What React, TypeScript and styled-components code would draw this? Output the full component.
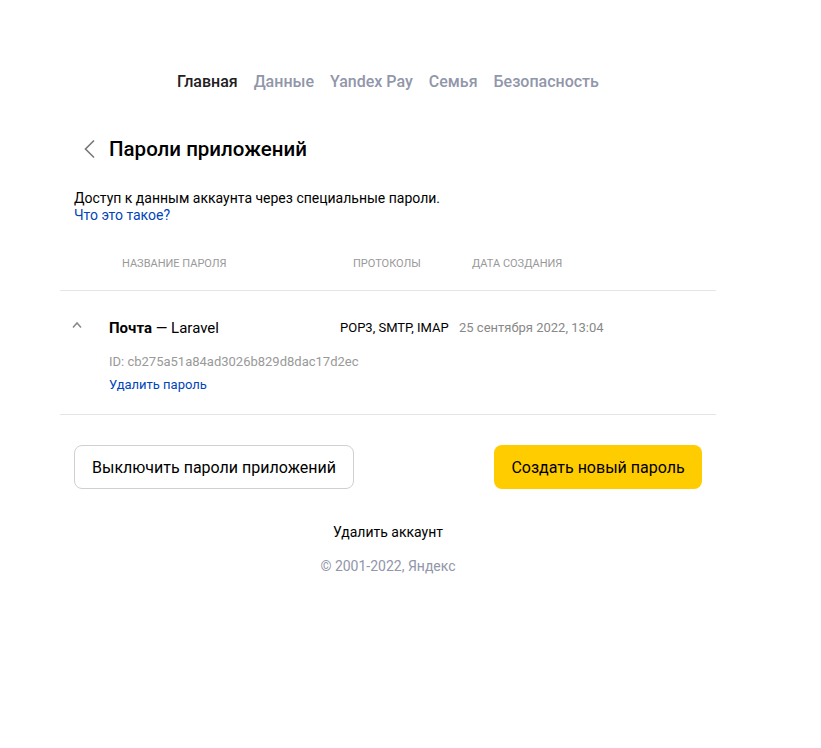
import React from "react";
import styled, { createGlobalStyle } from "styled-components";

const Global = createGlobalStyle`
  html, body { margin: 0; padding: 0; background: #fff; }
  body { font-family: Roboto, "Liberation Sans", Arial, sans-serif; color: #000; }
  * { box-sizing: border-box; }
`;

const Page = styled.div`
  width: 821px;
  min-height: 748px;
  padding: 0 0 0 60px;
`;

const Column = styled.div`
  width: 656px;
  display: flex;
  flex-direction: column;
`;

const Nav = styled.nav`
  display: flex;
  justify-content: center;
  gap: 16px;
  padding-top: 72px;
  height: 92px;
`;

const NavItem = styled.a<{ $active?: boolean }>`
  font-size: 16px;
  line-height: 20px;
  font-weight: 500;
  color: ${(p) => (p.$active ? "#21201f" : "#9196aa")};
  text-decoration: none;
  cursor: pointer;
`;

const TitleRow = styled.div`
  display: flex;
  align-items: center;
  gap: 4px;
  margin: 46px 0 0 14px;
  height: 22px;
`;

const BackButton = styled.button`
  width: 31px;
  height: 22px;
  border: 0;
  background: none;
  padding: 0;
  display: flex;
  align-items: center;
  justify-content: center;
  cursor: pointer;
`;

const Title = styled.h1`
  margin: 0;
  font-size: 20.5px;
  line-height: 22px;
  font-weight: 500;
  color: #000;
`;

const Description = styled.p`
  margin: 30px 0 0 14px;
  font-size: 14px;
  line-height: 17px;
  color: #000;
`;

const Link = styled.a<{ $size?: number }>`
  display: block;
  color: #0044bb;
  text-decoration: none;
  font-size: ${(p) => p.$size ?? 14}px;
  line-height: 17px;
  cursor: pointer;
`;

const grid = `
  display: grid;
  grid-template-columns: 49px 231px 119px 1fr;
`;

const HeaderRow = styled.div`
  ${grid}
  padding: 0 0 0 13px;
  margin-top: 33px;
  height: 34px;
  border-bottom: 1px solid #e5e5e5;
`;

const HeaderCell = styled.div`
  font-size: 11px;
  line-height: 14px;
  text-transform: uppercase;
  color: #999;
`;

const Row = styled.div`
  ${grid}
  padding: 28px 0 21px;
  border-bottom: 1px solid #e5e5e5;
`;

const Toggle = styled.div`
  display: flex;
  align-items: flex-start;
  padding: 2px 0 0 12px;
`;

const NameCell = styled.div`
  display: flex;
  flex-direction: column;
`;

const Name = styled.div`
  font-size: 15px;
  line-height: 18px;
  color: #000;
  b { font-weight: 700; }
`;

const IdText = styled.div`
  margin-top: 16px;
  font-size: 13px;
  line-height: 17px;
  color: #999;
  white-space: nowrap;
`;

const DeleteWrap = styled.div`
  margin-top: 6px;
`;

const Cell = styled.div<{ $muted?: boolean }>`
  font-size: 13px;
  line-height: 18px;
  color: ${(p) => (p.$muted ? "#888" : "#000")};
  white-space: nowrap;
`;

const Buttons = styled.div`
  display: flex;
  justify-content: space-between;
  padding: 0 14px;
  margin-top: 30px;
`;

const Button = styled.button<{ $primary?: boolean }>`
  height: 44px;
  padding: 0;
  border-radius: 8px;
  font-family: inherit;
  font-size: 16px;
  color: #000;
  white-space: nowrap;
  cursor: pointer;
  border: ${(p) => (p.$primary ? "0" : "1px solid #d0d0d0")};
  background: ${(p) => (p.$primary ? "#ffcc00" : "#fff")};
  width: ${(p) => (p.$primary ? "208px" : "280px")};
`;

const Footer = styled.footer`
  display: flex;
  flex-direction: column;
  align-items: center;
  margin-top: 34px;
  gap: 16px;
`;

const FooterLink = styled.a`
  font-size: 14px;
  line-height: 18px;
  color: #000;
  text-decoration: none;
`;

const Copyright = styled.div`
  font-size: 14px;
  line-height: 18px;
  color: #9196aa;
`;

export default function App() {
  return (
    <Page>
      <Global />
      <Column>
        <Nav>
          <NavItem $active>Главная</NavItem>
          <NavItem>Данные</NavItem>
          <NavItem>Yandex Pay</NavItem>
          <NavItem>Семья</NavItem>
          <NavItem>Безопасность</NavItem>
        </Nav>
        <TitleRow>
          <BackButton aria-label="Назад">
            <svg width="13" height="20" viewBox="0 0 13 20">
              <path d="M11 1.5 L2.5 10 L11 18.5" fill="none" stroke="#777" strokeWidth="1.6" />
            </svg>
          </BackButton>
          <Title>Пароли приложений</Title>
        </TitleRow>
        <Description>
          Доступ к данным аккаунта через специальные пароли.
          <Link>Что это такое?</Link>
        </Description>
        <HeaderRow>
          <div />
          <HeaderCell>Название пароля</HeaderCell>
          <HeaderCell>Протоколы</HeaderCell>
          <HeaderCell>Дата создания</HeaderCell>
        </HeaderRow>
        <Row>
          <Toggle>
            <svg width="10" height="8" viewBox="0 0 10 8">
              <path d="M1 6.5 L5 2 L9 6.5" fill="none" stroke="#888" strokeWidth="1.5" />
            </svg>
          </Toggle>
          <NameCell>
            <Name>
              <b>Почта</b> — Laravel
            </Name>
            <IdText>ID: cb275a51a84ad3026b829d8dac17d2ec</IdText>
            <DeleteWrap>
              <Link $size={13}>Удалить пароль</Link>
            </DeleteWrap>
          </NameCell>
          <Cell>POP3, SMTP, IMAP</Cell>
          <Cell $muted>25 сентября 2022, 13:04</Cell>
        </Row>
        <Buttons>
          <Button>Выключить пароли приложений</Button>
          <Button $primary>Создать новый пароль</Button>
        </Buttons>
        <Footer>
          <FooterLink>Удалить аккаунт</FooterLink>
          <Copyright>© 2001-2022, Яндекс</Copyright>
        </Footer>
      </Column>
    </Page>
  );
}
